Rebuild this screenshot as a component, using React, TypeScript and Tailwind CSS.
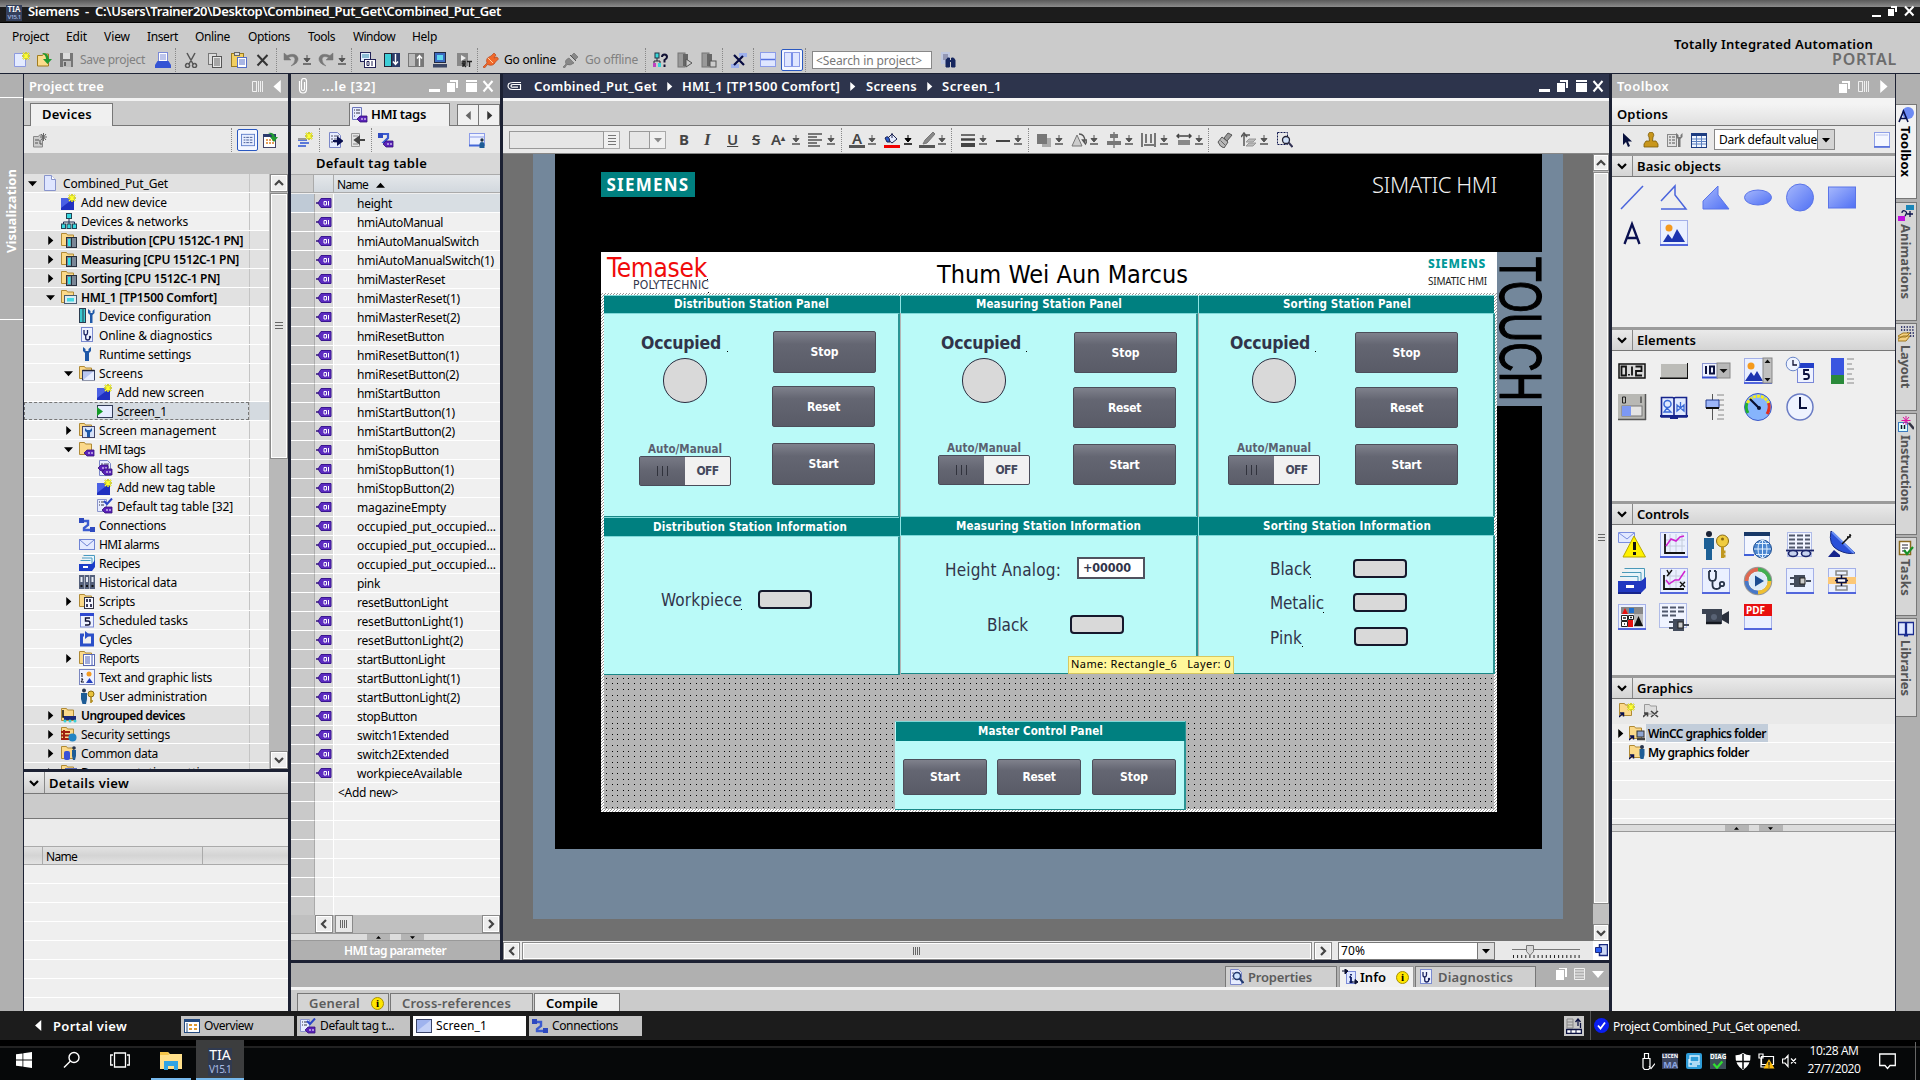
import React, { useLayoutEffect, useRef } from "react";

/* Text set to a given width by adjusting the letter spacing. */
function Fit({ w, children, className = "" }: { w: number; children: string; className?: string }) {
  const ref = useRef<HTMLSpanElement>(null);
  useLayoutEffect(() => {
    const el = ref.current;
    if (!el) return;
    el.style.letterSpacing = "0px";
    const box = el.getBoundingClientRect();
    const size = className.includes("vertical") ? box.height : box.width;
    el.style.letterSpacing = `${(w - size) / children.length}px`;
  }, [w, children, className]);
  return (
    <span ref={ref} className={`inline-block shrink-0 whitespace-pre ${className}`}>
      {children}
    </span>
  );
}

const star = (x: number, y: number) => (
  <g>
    <path d={`M${x} ${y - 4}v8M${x - 4} ${y}h8M${x - 3} ${y - 3}l6 6M${x + 3} ${y - 3}l-6 6`} stroke="#8a8a20" strokeWidth="1.700" />
    <path d={`M${x} ${y - 4}v8M${x - 4} ${y}h8M${x - 3} ${y - 3}l6 6M${x + 3} ${y - 3}l-6 6`} stroke="#ffff30" strokeWidth="1.100" />
  </g>
);
const folder = <path d="M.5 1.500h5l1 1.500h6v10.500h-12z" fill="#fbd98a" stroke="#b08a35" />;
const tagShape = (x: number, y: number) => (
  <g>
    <path d={`M${x} ${y + 3}l3-3h7v6h-7z`} fill="#5a22b8" stroke="#32107a" strokeWidth=".8" />
    <path d={`M${x + 5} ${y + 2}v2M${x + 8} ${y + 2}v2`} stroke="#fff" />
  </g>
);
const page = <path d="M2.500.500h8l3 3v12h-11z" fill="#e6ecff" stroke="#7a86c8" />;
const list = (c: string) => <path d="M4 4h2M7 4h5M4 7h2M7 7h5M4 10h2M7 10h5" stroke={c} />;

const I16: Record<string, React.ReactNode> = {
  project: (<><path d="M1.500.500h7l4 4v11h-11z" fill="#dfe6ff" stroke="#8894cc" /><path d="M8.500.500v4h4" fill="#fff" stroke="#8894cc" /></>),
  add: (<><rect x="0" y="4" width="13" height="12" fill="#2030c0" /><path d="M0 4h13L0 14z" fill="#4a60e4" />{star(11, 4)}</>),
  network: (<><path d="M8 5v4M2.500 12V9h11v3M8 9v3" stroke="#1b2a50" fill="none" /><rect x="5.500" y=".500" width="5" height="5" fill="#38d8e0" stroke="#245" /><rect x=".500" y="11" width="4" height="4.500" fill="#38d8e0" stroke="#245" /><rect x="6" y="11" width="4" height="4.500" fill="#38d8e0" stroke="#245" /><rect x="11.500" y="11" width="4" height="4.500" fill="#38d8e0" stroke="#245" /></>),
  plc: (<>{folder}<rect x="5.500" y="5.500" width="10" height="10" fill="#7a8696" stroke="#27303e" /><rect x="7" y="7" width="2.500" height="7" fill="#30e0e8" /><path d="M10.500 6v9" stroke="#27303e" /></>),
  hmi: (<>{folder}<rect x="3.500" y="6.500" width="12" height="8" fill="#d9ecf4" stroke="#4a5a70" /><rect x="6" y="9" width="7" height="3.500" fill="#45d8e2" /></>),
  devconf: (<><rect x=".500" y=".500" width="6" height="14" fill="#38c8ce" stroke="#2b3c50" /><path d="M4 1v13" stroke="#2b3c50" /><path d="M9 1v4l2 2v8h2.500V7l2-2V1l-2 2v2h-2V3z" fill="#1f58a8" /></>),
  diag: (<><rect x="2.500" y=".500" width="11" height="14" fill="#eef2ff" stroke="#7a8ad0" /><path d="M5 3v3q0 2 1.700 2T8.500 6V3M6.700 8v3q0 2 2 2t2-2" stroke="#1a2260" strokeWidth="1.300" fill="none" /><circle cx="11" cy="10" r="1.200" fill="#1a2260" /></>),
  wrench: <path d="M4 1v4l2 2v8h4V7l2-2V1L9.500 3v2h-3V3z" fill="#1f58a8" />,
  screens: (<>{folder}<rect x="3.500" y="5.500" width="12" height="9.500" fill="#b9c6f2" stroke="#333f66" /><path d="M4 15l11-9v9z" fill="#e8edff" /><path d="M3.500 5.500h12" stroke="#223" strokeWidth="1.500" /></>),
  screen: (<><rect x=".500" y="2.500" width="15" height="12" fill="#e6ecff" stroke="#333c58" /><path d="M0 4l6 4.500L0 13z" fill="#129a26" /></>),
  manage: (<>{folder}<rect x="3.500" y="4.500" width="12" height="11" fill="#d7e2f8" stroke="#446" /><path d="M6 6v3l2 1.500V15h3v-4.500L13 9V6l-2 2H8z" fill="#1f58a8" /></>),
  tagfolder: (<>{folder}{tagShape(5, 9)}</>),
  showtags: (<>{page}{list("#556")}{tagShape(1, 5)}{tagShape(5, 9)}</>),
  tagtable: (<><path d="M.500 1.500h9v12h-9z" fill="#e6ecff" stroke="#8a94cc" /><path d="M2 4h1M4 4h3M2 7h1M4 7h3" stroke="#334" /><path d="M7 3l3 3 5-5.500" stroke="#2a46c8" strokeWidth="2" fill="none" />{tagShape(5, 9)}</>),
  conn: (<><path d="M4 4h5v4l-4 3v2h7" stroke="#3b5bd0" strokeWidth="2.400" fill="none" /><rect x="0" y="1" width="5" height="5" fill="#2d49c0" /><rect x="11" y="10" width="5" height="5" fill="#2d49c0" /></>),
  mail: (<><rect x=".500" y="3.500" width="15" height="10" fill="#e4eaff" stroke="#6f83d4" /><path d="M1 4l7 6 7-6" stroke="#6f83d4" fill="none" /></>),
  recipe: (<><path d="M4.500.500h11v7M3 3h10v6M1.500 5.500h10" fill="#eaf6fc" stroke="#4a9ac0" /><path d="M0 9h13l3-4v7l-3 4H0z" fill="#1a3cc8" /><rect x="4" y="11" width="5" height="2" fill="#fff" /></>),
  history: (<><rect x="0" y="1" width="5" height="14" fill="#55607a" /><rect x="5.500" y="1" width="5" height="14" fill="#55607a" /><rect x="11" y="1" width="5" height="14" fill="#55607a" /><path d="M2.500 3v5M8 3v5M13.500 3v5" stroke="#e8ecf4" strokeWidth="2" /><path d="M2.500 11v2M8 11v2M13.500 11v2" stroke="#111" strokeWidth="2" /></>),
  scripts: (<>{folder}<rect x="5.500" y="4.500" width="9" height="11" fill="#f4f6ff" stroke="#334" /><path d="M8 6v3M11 6v3M8 11v3M12 11v3" stroke="#113" strokeWidth="1.600" /></>),
  sched: (<><rect x="1.500" y="1.500" width="13" height="13.500" fill="#eef2ff" stroke="#7a88d4" /><rect x="1" y="1" width="14" height="3" fill="#2f49d0" /><path d="M11 6H6.500v3h2.500q2 0 2 2t-2 2H6" stroke="#113" strokeWidth="1.400" fill="none" /></>),
  cycles: (<><path d="M5 4H2.500v10h11V4H9" stroke="#2b4fc8" strokeWidth="3" fill="none" /><path d="M6 0l5 4-5 4z" fill="#2b4fc8" /></>),
  reports: (<>{folder}<rect x="4.500" y="4.500" width="11" height="11" fill="#fff" stroke="#5a68b0" /><path d="M6 7h5M6 9h5M6 11h5M6 13h5M13 5v10" stroke="#4458b8" /></>),
  textlist: (<><rect x=".500" y=".500" width="15" height="15" fill="#eef2ff" stroke="#7a86c0" /><path d="M2 5l1-1v4M2 10h2l-2 3h3" stroke="#112" fill="none" /><circle cx="10" cy="5" r="2.500" fill="#f49a20" /><path d="M7 14l3.500-5L14 14z" fill="#2440c0" /></>),
  user: (<><circle cx="5" cy="2.500" r="2" fill="#26334c" /><path d="M2 5h6v6l-1 5H3.500L2 11z" fill="#1d5c96" /><circle cx="12" cy="6" r="3" fill="#e8c23c" stroke="#8a6a10" /><path d="M12 9v6M12 13h2" stroke="#b08a18" strokeWidth="1.600" /></>),
  ungrouped: (<>{folder}<path d="M2 3v7h9" stroke="#111" fill="none" strokeWidth="1.500" /><rect x="3" y="9" width="12" height="4" fill="#1a2a7a" /><circle cx="4" cy="14" r="1.500" fill="#38d0d8" /><circle cx="9" cy="14" r="1.500" fill="#38d0d8" /><circle cx="14" cy="14" r="1.500" fill="#38d0d8" /></>),
  security: (<>{folder}<path d="M0 6h9M0 9.500h9M0 13h8M3 4v9" stroke="#a02010" strokeWidth="2" /><circle cx="11.500" cy="11.500" r="4" fill="#2285c4" /></>),
  common: (<>{folder}<rect x="3" y="6" width="6" height="9" rx="2" fill="#3a52d8" /><circle cx="13" cy="3" r="1.800" fill="#26334c" /><path d="M11 5h4v6l-1 4h-2l-1-4z" fill="#1d5c96" /></>),
  newfile: (<><path d="M.500 1.500h11v13h-11z" fill="#e4ebff" stroke="#8d9ae0" />{star(12, 4)}</>),
  open: (<><path d="M.500 3.500h5l1-1.500h5v12h-11z" fill="#fbdc8c" stroke="#a07c20" /><path d="M5 1q6-1 7 6h3l-4.500 5L6 7h3q0-4-4-6" fill="#1f9a30" /></>),
  save: (<><rect x="1" y="1" width="13" height="14" fill="#777" /><rect x="4" y="1" width="7" height="6" fill="#ddd" /><rect x="4" y="9" width="8" height="6" fill="#bbb" /><path d="M6 10v4" stroke="#666" strokeWidth="2" /></>),
  print: (<><rect x="3.500" y=".500" width="9" height="9" fill="#fff" stroke="#7b8ad8" /><path d="M5 3h6M5 5h6M5 7h6" stroke="#7b8ad8" /><path d="M0 13l2.500-4h11l2.500 4v3H0z" fill="#3554d4" /></>),
  cut: <path d="M4 1l6 11M12 1L6 12M4.500 11.500a2 2 0 1 0 .1 0M11.500 11.500a2 2 0 1 0 .1 0" stroke="#555" strokeWidth="1.500" fill="none" />,
  copy: (<><rect x="1.500" y="1.500" width="8" height="11" fill="#ddd" stroke="#777" /><rect x="5.500" y="4.500" width="9" height="11" fill="#e8e8e8" stroke="#555" /><path d="M7 7h6M7 9h6M7 11h6M7 13h6" stroke="#666" /></>),
  paste: (<><rect x=".500" y="1.500" width="12" height="13" fill="#f2cf60" stroke="#9a7a20" /><rect x="3.500" y=".500" width="5" height="3" fill="#ddd" stroke="#666" /><rect x="6.500" y="5.500" width="9" height="10" fill="#fff" stroke="#556fc8" /><path d="M8 8h6M8 10h6M8 12h6" stroke="#556fc8" /></>),
  del: <path d="M2.500 3l10 10.500M12.500 3l-10 10.500" stroke="#333" strokeWidth="2" />,
  undo: <path d="M1 1v7h7L5.500 5.500Q11 3 12 7q0 4-4 7 8-3 7-8Q13 0 4 3.500z" fill="#777" stroke="#777" strokeWidth=".500" />,
  redo: <path d="M15 1v7H8l2.500-2.500Q5 3 4 7q0 4 4 7-8-3-7-8Q3 0 12 3.500z" fill="#777" stroke="#777" strokeWidth=".500" />,
  compile: (<><rect x=".500" y=".500" width="10" height="9" fill="#e6f0ff" stroke="#225" /><path d="M2 3h7M2 5h7" stroke="#38a" /><rect x="4.500" y="7.500" width="11" height="8" fill="#fff" stroke="#225" /><path d="M7 9.500v4h2v-4zM12 9v5" stroke="#225" fill="none" /></>),
  download: (<><rect x=".500" y="1.500" width="7" height="13" fill="#3ccdd6" stroke="#223" /><rect x="8" y="1" width="8" height="14" fill="#2b3c68" /><path d="M11.500 2v10M9 9.500l2.500 3 2.500-3" stroke="#fff" strokeWidth="1.400" fill="none" /></>),
  upload: (<><rect x=".500" y="1.500" width="7" height="13" fill="#bbb" stroke="#777" /><rect x="8" y="1" width="8" height="14" fill="#777" /><path d="M11.500 14V4M9 6.500l2.500-3 2.500 3" stroke="#fff" strokeWidth="1.400" fill="none" /></>),
  sim: (<><rect x="2.500" y=".500" width="11" height="10" fill="#3b6ac0" stroke="#222a44" /><rect x="5" y="3" width="6" height="5" fill="#60d8f0" /><rect x="1" y="12" width="14" height="3.500" fill="#3b4664" /></>),
  rt: (<><rect x="1" y="1" width="11" height="13" fill="#888" /><path d="M5 3l5 3-5 3z" fill="#eee" /><path d="M7 15V9.500h2l0 2.500H7l3 3M11 9.500h5M13.500 10v5" stroke="#222" strokeWidth="1.400" fill="none" /></>),
  plug: (<><path d="M0 15l4-4Q2 6 8 4l3-3 2 2-2 3 3-1 1.500 2-3 3Q10 15 4.500 12.500L1.500 16z" fill="#f0682a" stroke="#b03a10" strokeWidth=".600" /><path d="M5 6l5 5" stroke="#ffd0a0" /></>),
  unplug: (<><path d="M0 15l3-3Q1 8 6 6l5 5Q7 14 4 12.500L1.500 16zM8 4l3-3 4 4-3 3z" fill="#888" stroke="#666" strokeWidth=".600" /><path d="M7 3l6 6" stroke="#555" /></>),
  access: (<><path d="M4 5v4M1 13V9h6v4" stroke="#223" fill="none" /><rect x="2" y="1" width="4" height="5" fill="#38d8d8" stroke="#234" /><rect x="0" y="11" width="3" height="4" fill="#c040c0" /><rect x="5" y="11" width="3" height="4" fill="#38d8d8" /><path d="M9 5q0-2.500 2.500-2.500T14 5q0 1.500-2.500 3v2.500M11.500 12.500v2.500" stroke="#113" strokeWidth="2" fill="none" /></>),
  startcpu: (<><rect x="1" y="1" width="7" height="14" fill="#999" stroke="#777" /><rect x="6" y="2" width="5" height="12" fill="#666" /><path d="M9 7l6 4-6 4z" fill="#ccc" stroke="#555" /></>),
  stopcpu: (<><rect x="1" y="1" width="7" height="14" fill="#999" stroke="#777" /><rect x="6" y="2" width="5" height="12" fill="#666" /><rect x="9" y="9" width="6" height="6" fill="#ccc" stroke="#555" /></>),
  xref: (<><rect x="8" y="1" width="8" height="4" fill="#9db0ec" /><rect x="0" y="12" width="8" height="4" fill="#9db0ec" /><path d="M3 3l10 10M12 4L3 13" stroke="#060a40" strokeWidth="2.200" /></>),
  splith: (<><rect x=".500" y=".500" width="15" height="14" fill="#dfe6ff" stroke="#8c9ce8" /><path d="M1 7.500h14" stroke="#5570e0" strokeWidth="1.500" /></>),
  splitv: (<><rect x=".500" y=".500" width="15" height="14" fill="#dfe6ff" stroke="#8c9ce8" /><path d="M8 1v13" stroke="#5570e0" strokeWidth="1.500" /></>),
  find: (<><rect x="0" y="0" width="9" height="12" fill="#c0c8e0" /><path d="M2 3h5M2 5h5M2 7h3" stroke="#668" /><path d="M5 15V8l1.500-2h2V15zM10.500 15V6h2L14 8v7z" fill="#16265e" stroke="#16265e" /><path d="M8 9h3" stroke="#16265e" strokeWidth="2" /></>),
  hmitags: (<><path d="M.500.500h9v12h-9z" fill="#e6ecff" stroke="#6a74bc" /><path d="M2 3h1M4 3h4M2 6h1M4 6h4M2 9h1" stroke="#334" />{tagShape(5, 9)}</>),
  grayfolder: (<><path d="M1.500 4.500h5l1-1.500h3v12h-9z" fill="#ccc" stroke="#888" /><path d="M3 8h4M3 11h3M8 8v4h2" stroke="#555" fill="none" /><path d="M11.500 1v8M8 5h7M9 2l5 6M14 2L9 8" stroke="#666" /></>),
  grid: (<><rect x=".500" y="1.500" width="15" height="13" fill="#e6edff" stroke="#5a7ac8" /><path d="M3 5h2M6 5h3M10 5h3M3 8h2M6 8h3M10 8h3M3 11h2M6 11h3M10 11h3" stroke="#334a88" /></>),
  gridgreen: (<><rect x="0.500" y="2.500" width="12" height="13" fill="#fff" stroke="#446" /><rect x="0" y="2" width="13" height="3" fill="#2a3a6c" /><path d="M3 8h2M6 8h2M9 8h2M3 11h2M6 11h2M9 11h2" stroke="#e08020" strokeWidth="1.500" /><path d="M5 1q6-1 7 4h3l-4 5-4-5h2q0-3-4-4" fill="#1f9a30" /></>),
  insrow: (<><path d="M0 8h9M2 11h9M0 14h8" stroke="#5a78d8" strokeWidth="2" /><path d="M0 7h8" stroke="#999" strokeWidth="2" />{star(11, 4)}</>),
  exp: (<>{page}{list("#556")}<path d="M6 9h7M11 6l4 3-4 3z" stroke="#0a1050" strokeWidth="2" fill="#0a1050" /></>),
  imp: (<><path d="M1.500 1.500h8v13h-8z" fill="#e4e4e4" stroke="#999" /><path d="M3 4h5M3 12h5" stroke="#888" /><path d="M15 8H8M9 5L5 8l4 3z" stroke="#444" strokeWidth="2" fill="#444" /></>),
  tagconn: (<><path d="M2 2h8v4l-4 4h4" stroke="#3b5bd0" strokeWidth="2.200" fill="none" /><rect x="0" y="1" width="5" height="5" fill="#2d49c0" />{tagShape(5, 9)}</>),
  winuser: (<><rect x=".500" y="1.500" width="15" height="12" fill="#eef2ff" stroke="#8c9ce8" /><path d="M0 13.500h11" stroke="#4468d8" strokeWidth="2" /><path d="M1 5h14" stroke="#8c9ce8" /><circle cx="13" cy="8" r="1.700" fill="#234" /><path d="M10.500 16v-4q0-2 2.500-2t2.500 2v4z" fill="#1d5c96" /></>),
  tag: (<><path d="M0 8h4" stroke="#32107a" strokeWidth="1.500" /><path d="M2 8l3-4.500h10v9H5z" fill="#5c2cc0" stroke="#3a1690" /><path d="M8 6.500h2.500v3.500H8zM12.500 6v4.500" stroke="#fff" fill="none" /></>),
  cursor: <path d="M4 1v12l3-3 2 5 2-1-2-4.500h4z" fill="#08103c" />,
  stamp: <path d="M8 0a3 3 0 0 1 2 5l-.5 4H13l2 3v3H1v-3l2-3h3.500L6 5a3 3 0 0 1 2-5z" fill="#c8961c" stroke="#7a5a08" strokeWidth=".800" />,
  toolcfg: (<><rect x="0.500" y="2.500" width="9" height="12" fill="#e2e2e2" stroke="#888" /><path d="M2 5h2M5 5h3M2 8h2M5 8h3M2 11h2M5 11h3" stroke="#555" /><path d="M9 1v4l2 2v8h2.500V7l2-2V1l-2 2v2h-2V3z" fill="#777" /></>),
  table: (<><rect x=".500" y="1.500" width="15" height="14" fill="#f0f6ff" stroke="#1c3c80" /><rect x="0" y="1" width="16" height="3" fill="#1c3c80" /><path d="M5.500 4v11M10.500 4v11M1 7h14M1 9.500h14M1 12h14" stroke="#5a80c0" /></>),
  win: (<><rect x=".500" y=".500" width="15" height="14" fill="#f4f7ff" stroke="#8fa0e6" /><path d="M0 15h16" stroke="#4a66d8" strokeWidth="1.500" /><path d="M2 3h12" stroke="#b8c2ee" /></>),
  overview: (<><rect x=".500" y="1.500" width="15" height="13" fill="#fff" stroke="#234a80" /><rect x="0" y="1" width="16" height="3" fill="#234a80" /><path d="M5 7h3M10 7h3M5 11h3M10 11h3" stroke="#e09a30" strokeWidth="2" /><path d="M3 5v9" stroke="#234a80" /></>),
  scr: (<><rect x=".500" y="1.500" width="15" height="13" fill="#c3d0f6" stroke="#3a4468" /><path d="M1 2h14L1 13z" fill="#9fb3ee" /></>),
  props: (<>{page}{list("#778")}<circle cx="9" cy="7" r="3.500" fill="#cfe4ff" stroke="#223a70" strokeWidth="1.400" /><path d="M11.500 9.500l4 4.500" stroke="#223a70" strokeWidth="2" /></>),
  infoi: (<><rect x="4.500" y="2.500" width="9" height="12" fill="#dfe8ff" stroke="#7a8ad8" /><path d="M9 5v1.500M9 8v5M7.500 13h3M7.500 8H9" stroke="#0a1860" strokeWidth="1.800" /><path d="M0 2h5M3 0l3 2-3 3zM10 13h4M13 10.500l3 2.500-3 2z" fill="#0a1030" stroke="#0a1030" /></>),
  newgf: (<>{folder}<path d="M0 15l4-4M1 11h3.500v3.500" stroke="#0a1050" strokeWidth="1.500" fill="none" />{star(12, 5)}</>),
  delgf: (<><path d="M1.500 2.500h5l1 1.500h6v8h-12z" fill="#ddd" stroke="#999" /><path d="M0 15l4-4M1 11h3.500v3.500M8 9l7 6M15 9l-7 6" stroke="#444" strokeWidth="1.600" fill="none" /></>),
  gfpc: (<>{folder}<rect x="8" y="6" width="7" height="6" fill="#8ea4d0" stroke="#333" /><path d="M8 14h8" stroke="#444" strokeWidth="2.500" /><path d="M0 15l4-4M1 11h3.500v3.500" stroke="#0a1050" strokeWidth="1.500" fill="none" /></>),
  gfuser: (<>{folder}<circle cx="13" cy="3" r="2" fill="#26334c" /><path d="M10.500 5h5v6l-1 4h-3l-1-4z" fill="#1d5c96" /><path d="M0 15l4-4M1 11h3.500v3.500" stroke="#0a1050" strokeWidth="1.500" fill="none" /></>),
  align: <path d="M1 2h14M1 5h9M1 8h14M1 11h9M1 14h12" stroke="#777" strokeWidth="2" />,
  fill: (<><path d="M3 7l5-5 5 5-5 4z" fill="#e6ecff" stroke="#1a2250" /><path d="M1 6q4-4 5 4H3zM8 1v5" fill="#2a58c8" stroke="#1a2250" /><rect x="0" y="13" width="16" height="3" fill="#f00000" /></>),
  pen: (<><path d="M14 0l2 2-8 9-4 1 2-4z" fill="#888" stroke="#777" /><rect x="0" y="13" width="16" height="3" fill="#555" /></>),
  lines: (<><path d="M1 3h14" stroke="#444" strokeWidth="1.500" /><path d="M1 7.500h14" stroke="#444" strokeWidth="2.500" /><path d="M1 13h14" stroke="#444" strokeWidth="4" /></>),
  line1: <path d="M1 9h14" stroke="#444" strokeWidth="2" />,
  order: (<><rect x="6" y="6" width="9" height="9" fill="#aaa" /><rect x="1" y="2" width="10" height="10" fill="#777" /></>),
  rotate: (<><path d="M1 14l5-11 5 11z" fill="#ccc" stroke="#777" /><path d="M8 2q6 0 6 8M11.500 8l3 4 2-4z" stroke="#555" fill="none" strokeWidth="1.300" /></>),
  center: (<><path d="M8 0v16" stroke="#444" /><rect x="4" y="2" width="8" height="4" fill="#777" /><rect x="1" y="9" width="14" height="4" fill="#777" /></>),
  dist: <path d="M1 1v14M14 1v14M5 2v9M10 2v9M3 13h10" stroke="#777" strokeWidth="2" />,
  size: (<><path d="M1 4h14M3 2L1 4l2 2M13 2l2 2-2 2" stroke="#444" fill="none" strokeWidth="1.500" /><rect x="2" y="8" width="12" height="5" fill="#888" /></>),
  brush: (<><path d="M11 1l4 2-5 6-3-3z" fill="#999" stroke="#555" /><path d="M5 5l6 5-4 6q-4-1-6-6z" fill="#b8b8b8" stroke="#555" /><path d="M3.500 8.500l5 5" stroke="#666" /></>),
  layer: (<><path d="M3 14V3M0 5l3-4 3 4M3 3h6" stroke="#555" strokeWidth="1.500" fill="none" /><path d="M5 10l3-3h7l-3 3zM5 14l3-3h7l-3 3z" fill="#bbb" stroke="#999" /></>),
  zoomsel: (<><rect x=".500" y=".500" width="10" height="12" fill="none" stroke="#101850" strokeDasharray="2 1" /><circle cx="9" cy="8" r="3.500" fill="#cfe0f8" stroke="#223" strokeWidth="1.300" /><path d="M11.500 10.500l4 4.500" stroke="#335" strokeWidth="2" /></>),
  tabtool: (<><circle cx="10" cy="6" r="6" fill="#6c8af4" /><path d="M1 15L5.500 4 10 15M2.500 11.500h6" stroke="#08104a" strokeWidth="1.600" fill="none" /></>),
  tabanim: (<><rect x="8" y="0" width="8" height="5" fill="#1a86b8" /><rect x="0" y="11" width="7" height="5" fill="#c010e0" /><path d="M4 8q0-3 3-2t0 5M12 6v6M9 9h6" stroke="#08104a" strokeWidth="1.300" fill="none" /></>),
  tablayout: (<><path d="M3 1h13M3 4h13M9 7h7M12 10h4" stroke="#0a1050" strokeWidth="1.300" strokeDasharray="1.300 1.500" /><path d="M0 13l5-3h7l-4 5H0zM0 10l5-3h7l-4 4H0z" fill="#f4d080" stroke="#a07820" /></>),
  tabinstr: (<><rect x=".500" y="6.500" width="9" height="9" fill="#dff" stroke="#3a7ac0" /><path d="M3.500 9v4M6.500 9v4" stroke="#112" strokeWidth="1.500" /><path d="M8 0v9M3.500 4.500h9M5 1l6 7M11 1L5 8" stroke="#e010a0" /><path d="M11 7l5 6" stroke="#334" strokeWidth="2.500" /></>),
  tabtasks: (<><rect x="1.500" y="1.500" width="11" height="13" fill="#fff" stroke="#8a6a20" strokeWidth="1.500" /><path d="M4 5h6M4 8h6M4 11h4" stroke="#223" /><path d="M6 10l3 4 6-7" stroke="#189028" strokeWidth="2.200" fill="none" /></>),
  tablib: (<><path d="M.500 1.500h7v12h-7zM8.500 1.500h7v12h-7z" fill="#dfe8ff" stroke="#1a2c90" strokeWidth="1.300" /><path d="M6 14.500h4" stroke="#1a2c90" strokeWidth="2" /></>),
};

function Ic({ n, s = 16, className = "" }: { n: string; s?: number; className?: string }) {
  return (
    <svg width={s} height={s} viewBox="0 0 16 16" fill="none" className={`block shrink-0 ${className}`}>
      {I16[n]}
    </svg>
  );
}

const frame28 = <><rect x=".500" y="1.500" width="27" height="25" fill="#eaf0ff" stroke="#a4b0e8" /><path d="M0 26h28" stroke="#5266dc" strokeWidth="2" /></>;
const I28: Record<string, React.ReactNode> = {
  line: <path d="M3 26L25 3" stroke="#4a64dc" strokeWidth="1.500" />,
  poly: <path d="M1 18L15 3v9l11 14H1" stroke="#4a64dc" strokeWidth="1.500" />,
  polygon: <path d="M1 26v-8L16 3v9l11 14z" fill="url(#gb)" stroke="#5a74e8" />,
  ellipse: <ellipse cx="14" cy="14.500" rx="13.500" ry="7.500" fill="url(#gb)" stroke="#5a74e8" />,
  circle: <circle cx="14" cy="14.500" r="13.500" fill="url(#gb)" stroke="#5a74e8" />,
  rect: <rect x=".500" y="4" width="27" height="21" fill="url(#gb)" stroke="#5a74e8" />,
  text: <path d="M6.500 25L14 5l7.500 20M9 19h10" stroke="#0a1050" strokeWidth="2.300" />,
  pic: (<>{frame28}<circle cx="9" cy="9" r="3.500" fill="#f49a20" /><path d="M3 23l5-8 4 5 5-10 8 13z" fill="#1c34b0" /></>),
  num: (<><rect x="1" y="7" width="26" height="14" fill="#d8d8d8" stroke="#111" strokeWidth="1.500" /><path d="M3.500 9.500h4.500v9H3.500zM11 18.500v-1.500M14 9.500v9M17.500 9.500h6v4.500H18v4.500h6" stroke="#111" strokeWidth="1.800" /></>),
  btn: (<><rect x="0" y="6" width="28" height="16" fill="#111" /><rect x="0" y="6" width="27" height="14.500" fill="#bcbcb8" /><path d="M0 6.500h27M.500 6v14" stroke="#eee" /></>),
  combo: (<><rect x=".500" y="6.500" width="27" height="14" fill="#eef2ff" stroke="#8a94d0" /><path d="M0 20.500h16" stroke="#3850d0" strokeWidth="2" /><path d="M4 9v8M8 9.500h4v7H8z" stroke="#0a1040" strokeWidth="2" /><rect x="15" y="6" width="13" height="15" fill="#b8b8b8" stroke="#888" /><path d="M17.500 12h8l-4 4z" fill="#111" /></>),
  gio: (<>{frame28}<circle cx="7" cy="9" r="3.500" fill="#f49a20" /><path d="M1 24l6-9 3 4 3-5 6 10z" fill="#1c34b0" /><rect x="19" y="1" width="9" height="25" fill="#c0c0c0" stroke="#888" /><path d="M20.500 6l3-3.500 3 3.500zM20.500 21l3 3.500 3-3.500z" fill="#111" /></>),
  date: (<><rect x="11.500" y="6.500" width="16" height="19" fill="#eef2ff" stroke="#7a88d8" /><rect x="11" y="6" width="17" height="5" fill="#2440c8" /><path d="M23 13h-5v4h2.500q2.500 0 2.500 2.500T20.500 22H17.500" stroke="#0a1040" strokeWidth="1.800" /><circle cx="7" cy="7" r="6.800" fill="#eef3ff" stroke="#6a86c8" /><path d="M7 3v5h4" stroke="#113" strokeWidth="1.300" /></>),
  bar: (<><rect x="3" y="1" width="13" height="26" fill="#3a56e0" /><rect x="3" y="18" width="13" height="9" fill="#2a8a3a" /><path d="M19 2h7M19 7h5M19 12h7M19 17h5M19 22h7M19 26h7" stroke="#888" /></>),
  sw: (<><rect x="0" y="1" width="28" height="26" fill="#b8b8b4" /><path d="M0 26.500h28M27.500 1v26" stroke="#555" strokeWidth="1.500" /><path d="M4.500 4h3v6h-3zM23 3.500V10" stroke="#222" /><rect x="4" y="13" width="20" height="10" fill="#e4e4e4" stroke="#777" /><rect x="4" y="13" width="9" height="10" fill="#7c98f4" /></>),
  lib: (<><path d="M1.500 4.500h11q1.500 0 1.500 1.500v18H1.500zM26.500 4.500h-11Q14 4.500 14 6v18h12.500z" fill="#e0eaff" stroke="#16248c" strokeWidth="1.600" /><path d="M0 23h28M10 25h8" stroke="#16248c" strokeWidth="2" /><circle cx="7.500" cy="11" r="3.500" stroke="#3a6ad8" strokeWidth="1.500" /><path d="M4 19l3-4 4 4zM17 12l7 6v-6l-7 6zM20.500 15V9" stroke="#3a6ad8" strokeWidth="1.300" /></>),
  slider: (<><path d="M15 2h7M16 7h6M16 12h6M16 17h6M16 22h6M15 26h7" stroke="#888" /><path d="M10.500 1v26" stroke="#555" /><path d="M4 7h13v8H4z" fill="#9db6f8" stroke="#223a90" /><path d="M4 15h13" stroke="#111" strokeWidth="2" /></>),
  gauge: (<><circle cx="14" cy="14" r="13.500" fill="#86b4fc" stroke="#3c58c8" /><path d="M4 20a11.500 11.500 0 0 1-1-10" stroke="#20b030" strokeWidth="3" /><path d="M3.500 10a11.500 11.500 0 0 1 21 0" stroke="#f4ec20" strokeWidth="3" strokeDasharray="3 1" /><path d="M24.500 10q2 5-1.500 11" stroke="#e03020" strokeWidth="3" /><path d="M6 6l9 9" stroke="#0a1030" strokeWidth="2.200" /><circle cx="15" cy="15" r="2" fill="#0a1030" /></>),
  clock: (<><circle cx="14" cy="14" r="13" fill="#eef3ff" stroke="#6a7cc4" strokeWidth="1.500" /><path d="M14 4v11h7" stroke="#08103a" strokeWidth="2" /></>),
  alarm: (<><path d="M.500 1.500h16v10H.500z" fill="#e2e9ff" stroke="#7a8ee0" /><path d="M1 2l8 6 7-6" stroke="#7a8ee0" /><path d="M16 5l11.500 21H5z" fill="#fff200" stroke="#b8a800" /><path d="M16.500 11v8M16.500 21v3" stroke="#111" strokeWidth="3" /></>),
  trend: (<>{frame28}<path d="M10 3v18M16 3v18M22 3v18M5 9h20M5 15h20" stroke="#c4ccdc" /><path d="M5 3v19h20" stroke="#111" strokeWidth="1.800" /><path d="M6 15l5-7 5 2 4-4 4-1" stroke="#d020d0" strokeWidth="1.500" /></>),
  userk: (<><circle cx="7" cy="3" r="3" fill="#1a2236" /><path d="M2 7h10v11H10v11H4V18H2z" fill="#1d6096" /><circle cx="20.500" cy="10" r="6" fill="#f0cc40" stroke="#8a6a10" /><circle cx="20.500" cy="8" r="1.500" fill="#8a6a10" /><path d="M20.500 15v12M20.500 21h3M20.500 25h3" stroke="#c09820" strokeWidth="3" /></>),
  html: (<><rect x=".500" y="1.500" width="25" height="22" fill="#f4f7ff" stroke="#a4b4e0" /><rect x="0" y="1" width="26" height="4" fill="#183868" /><path d="M0 24h10" stroke="#4060d8" strokeWidth="2" /><circle cx="18.500" cy="18" r="9" fill="#4a86d0" stroke="#1c4c90" /><path d="M10 18h17M18.500 9v18M12 12.500h13M12 23.500h13" stroke="#e0efff" /><ellipse cx="18.500" cy="18" rx="4.500" ry="9" stroke="#e0efff" /></>),
  watch: (<><rect x="1.500" y="1.500" width="24" height="24" fill="#f0f4ff" stroke="#b0bce8" /><path d="M3 4.500h6M11 4.500h6M19 4.500h5M3 8.500h6M11 8.500h6M19 8.500h5M3 12.500h6M11 12.500h6M19 12.500h5M3 16.500h6M11 16.500h6M19 16.500h5" stroke="#50586c" strokeWidth="2" /><path d="M0 19.500h28" stroke="#1a2468" strokeWidth="1.800" /><ellipse cx="7" cy="22.500" rx="4.500" ry="3" fill="#c8d4f0" stroke="#1a2468" strokeWidth="1.600" /><ellipse cx="20" cy="22.500" rx="4.500" ry="3" fill="#c8d4f0" stroke="#1a2468" strokeWidth="1.600" /></>),
  dish: (<><path d="M3 0Q0 14 10 19t17 3z" fill="#2a50d8" stroke="#182a80" /><path d="M4 1l22 21" stroke="#6a90f4" strokeWidth="2" /><path d="M14 13l9-9M22 3v3h-3" stroke="#111" strokeWidth="1.500" /><path d="M0 26l6-7 6 5v2z" fill="#16248c" /></>),
  recv: (<><path d="M6.500 1.500h20v13M4 5.500h19v9M2 9.500h18v6" fill="#e8f4fa" stroke="#4a98b8" /><path d="M0 14h23l5-4v11l-5 5H0z" fill="#2038c0" /><path d="M0 26h23" stroke="#16248c" strokeWidth="2" /><rect x="8" y="18" width="8" height="3" fill="#fff" /></>),
  xy: (<>{frame28}<path d="M10 3v18M16 3v18M5 9h20M5 15h20" stroke="#c4ccdc" /><path d="M4 8v14h20" stroke="#111" strokeWidth="1.800" /><path d="M6 13l3 4 6-4 4 0 6-9" stroke="#d020d0" strokeWidth="1.500" /><path d="M7 3l2 4 3-4M9 7l-2 2M20 15l5 5M25 15l-5 5" stroke="#111" strokeWidth="1.400" /></>),
  diag: (<>{frame28}<path d="M7 4v6q0 4 3.500 4T14 10V4M10.500 14v4q0 4 4 4t4-4M7 4h2M12 4h2" stroke="#283448" strokeWidth="1.800" /><circle cx="20" cy="17" r="2.200" stroke="#283448" strokeWidth="1.800" /></>),
  media: (<><circle cx="14" cy="14" r="12" stroke="#999" strokeWidth="4.500" /><path d="M14 2.500A11.500 11.500 0 0 1 25.500 14" stroke="#40b050" strokeWidth="3.500" /><path d="M25.500 14A11.500 11.500 0 0 1 14 25.500" stroke="#f0c030" strokeWidth="3.500" /><path d="M14 25.500A11.500 11.500 0 0 1 2.500 14" stroke="#4878c8" strokeWidth="3.500" /><path d="M2.500 14A11.500 11.500 0 0 1 14 2.500" stroke="#e06850" strokeWidth="3.500" /><circle cx="14" cy="14" r="9" fill="#dceaf8" /><path d="M11 8.500l9 5.500-9 5.500z" fill="#1c4c90" /></>),
  plugc: (<>{frame28}<path d="M4 11h5M4 17h5M20 14h5" stroke="#444c5c" strokeWidth="2" /><path d="M8 8h11v12H8z" fill="#444c5c" /><rect x="14" y="11" width="5" height="6" fill="#ccc" stroke="#222" /></>),
  sysd: (<>{frame28}<rect x="0" y="10" width="28" height="7" fill="#fcc878" /><rect x="8" y="4" width="11" height="4" stroke="#888" strokeWidth="1.500" /><rect x="8" y="19" width="11" height="4" stroke="#888" strokeWidth="1.500" /><path d="M13.500 8v11M7 13.500h13" stroke="#0a1040" strokeWidth="1.500" /><rect x="9" y="11.500" width="9" height="4" fill="#fff" stroke="#0a1040" strokeWidth="1.600" /></>),
  graf: (<>{frame28}<rect x="3" y="4" width="22" height="7" fill="#888" /><path d="M4 11l3-6 3 6z" fill="#e81010" /><rect x="11" y="5" width="5" height="5" fill="#2070d0" /><path d="M3.500 12.500h6v5h-6zM3.500 18.500h6v5h-6zM10.500 12.500h5v4h-5z" fill="#fff" stroke="#222" /><path d="M5 15h3M12 14.500h2M6 21h1" stroke="#222" strokeWidth="1.500" /><rect x="10" y="17" width="5" height="7" fill="#e81010" /><rect x="16" y="11" width="9" height="13" fill="#bbb" /><path d="M16 23l4.500-10L25 23z" fill="#111" /></>),
  plcw: (<><rect x="-.500" y=".500" width="27" height="24" fill="#f0f4ff" stroke="#b0bce8" /><path d="M2 4.500h6M10 4.500h6M18 4.500h6M2 8.500h6M10 8.500h6M18 8.500h6M2 12.500h6M10 12.500h6" stroke="#50586c" strokeWidth="2" /><path d="M9 19h5M9 25h5M24 22h5" stroke="#444c5c" strokeWidth="2" /><path d="M13 16h11v12H13z" fill="#444c5c" /><rect x="18" y="19" width="5" height="6" fill="#ccc" stroke="#222" /></>),
  cam: (<><path d="M0 6h20v15H4V11H0z" fill="#3c4452" /><path d="M20 12l7-4v13l-7-4z" fill="#2a303c" /><circle cx="12" cy="14" r="3" fill="#586274" /><path d="M4 20h15" stroke="#14181f" strokeWidth="2.500" /></>),
  pdf: (<>{frame28}<rect x="0" y="1" width="28" height="12" fill="#e81010" /></>),
};

function Big({ n }: { n: string }) {
  return (
    <div className="relative h-9 w-[42px]">
      <svg width="28" height="28" viewBox="0 0 28 28" fill="none" className="block overflow-visible">{I28[n]}</svg>
      {n === "pdf" && <span className="absolute top-0 left-[2px] text-[10px] leading-[14px] font-bold text-white">PDF</span>}
    </div>
  );
}

const Sep = ({ className = "" }: { className?: string }) => (
  <span className={`w-0 shrink-0 border-l border-dotted border-[#888] ${className}`} />
);
const Pm = ({ className = "", c = "#555" }: { className?: string; c?: string }) => (
  <svg width="8" height="10" viewBox="0 0 8 10" className={`block shrink-0 ${className}`}>
    <path d="M4 0v6M1 3.500L4 7l3-3.500z" stroke={c} fill={c} /><path d="M0 9h8" stroke={c} strokeWidth="1.500" />
  </svg>
);
const Chev = ({ d, c = "#444" }: { d: "up" | "down" | "left" | "right"; c?: string }) => (
  <svg width="10" height="10" viewBox="0 0 10 10" fill="none" stroke={c} strokeWidth="2.200" className="block">
    <path d={{ up: "M1 7l4-4 4 4", down: "M1 3l4 4 4-4", left: "M7 1L3 5l4 4", right: "M3 1l4 4-4 4" }[d]} />
  </svg>
);
const SbBtn = ({ d, className = "" }: { d: "up" | "down" | "left" | "right"; className?: string }) => (
  <span className={`flex shrink-0 items-center justify-center border border-[#8a8a8a] bg-[#ededed] shadow-[inset_0_0_0_1px_#fff] ${className}`}>
    <Chev d={d} />
  </span>
);
const WinBtns = ({ c = "#fff" }: { c?: string }) => (
  <svg width="66" height="14" viewBox="0 0 66 14" fill={c} className="block shrink-0">
    <path d="M0 10h11v3H0z" /><path d="M18 4h8v9h-8z" /><path d="M21 1h8v8h-2V3h-6z" /><path d="M37 1h11v2H37zM37 4h11v9H37z" />
    <path d="M54.500 2l9 10.500M63.500 2l-9 10.500" stroke={c} strokeWidth="2" />
  </svg>
);
const Bars = () => (
  <svg width="11" height="11" viewBox="0 0 11 11" className="block"><path d="M.500.500h4v10h-4zM4.500 0v11M6.500 0v11M8.500 0v11M10.500 0v11" stroke="#f0f0f0" fill="none" /></svg>
);
const Tri = ({ d, s = 8, c = "#000" }: { d: "l" | "r" | "u" | "d"; s?: number; c?: string }) => (
  <svg width={s} height={s} viewBox="0 0 8 8" fill={c} className="block shrink-0">
    <path d={{ l: "M6 0v8L1.500 4z", r: "M2 0v8l4.500-4z", u: "M0 6h8L4 1.500z", d: "M0 2h8L4 6.500z" }[d]} />
  </svg>
);

type TreeRow = [number, string, string, number, ("r" | "d" | "")?, boolean?, boolean?];
const tree: TreeRow[] = [
  [0, "project", "Combined_Put_Get", 105, "d", true],
  [1, "add", "Add new device", 86],
  [1, "network", "Devices & networks", 107],
  [1, "plc", "Distribution [CPU 1512C-1 PN]", 162, "r", true, true],
  [1, "plc", "Measuring [CPU 1512C-1 PN]", 158, "r", true, true],
  [1, "plc", "Sorting [CPU 1512C-1 PN]", 139, "r", true, true],
  [1, "hmi", "HMI_1 [TP1500 Comfort]", 136, "d", true, true],
  [2, "devconf", "Device configuration", 112],
  [2, "diag", "Online & diagnostics", 113],
  [2, "wrench", "Runtime settings", 92],
  [2, "screens", "Screens", 44, "d"],
  [3, "add", "Add new screen", 87],
  [3, "screen", "Screen_1", 50],
  [2, "manage", "Screen management", 117, "r"],
  [2, "tagfolder", "HMI tags", 46, "d"],
  [3, "showtags", "Show all tags", 72],
  [3, "add", "Add new tag table", 98],
  [3, "tagtable", "Default tag table [32]", 116],
  [2, "conn", "Connections", 67],
  [2, "mail", "HMI alarms", 60],
  [2, "recipe", "Recipes", 41],
  [2, "history", "Historical data", 78],
  [2, "scripts", "Scripts", 36, "r"],
  [2, "sched", "Scheduled tasks", 89],
  [2, "cycles", "Cycles", 33],
  [2, "reports", "Reports", 40, "r"],
  [2, "textlist", "Text and graphic lists", 113],
  [2, "user", "User administration", 108],
  [1, "ungrouped", "Ungrouped devices", 104, "r", true, true],
  [1, "security", "Security settings", 89, "r", true],
  [1, "common", "Common data", 77, "r", true],
  [1, "reports", "Documentation settings", 140, "r", true],
];
const indent = ["w-[2px]", "w-[20px]", "w-[38px]", "w-[56px]"];

const tags: [string, number][] = [
  ["height", 35], ["hmiAutoManual", 86], ["hmiAutoManualSwitch", 122], ["hmiAutoManualSwitch(1)", 137], ["hmiMasterReset", 88],
  ["hmiMasterReset(1)", 103], ["hmiMasterReset(2)", 103], ["hmiResetButton", 87], ["hmiResetButton(1)", 102], ["hmiResetButton(2)", 102],
  ["hmiStartButton", 83], ["hmiStartButton(1)", 98], ["hmiStartButton(2)", 98], ["hmiStopButton", 82], ["hmiStopButton(1)", 97],
  ["hmiStopButton(2)", 97], ["magazineEmpty", 89], ["occupied_put_occupied...", 139], ["occupied_put_occupied...", 139],
  ["occupied_put_occupied...", 139], ["pink", 23], ["resetButtonLight", 91], ["resetButtonLight(1)", 106], ["resetButtonLight(2)", 106],
  ["startButtonLight", 88], ["startButtonLight(1)", 103], ["startButtonLight(2)", 103], ["stopButton", 60], ["switch1Extended", 92],
  ["switch2Extended", 92], ["workpieceAvailable", 105],
];

function ProjectTree() {
  return (
    <div className="flex w-[264px] flex-col bg-[#efefef]">
      <div className="flex h-6 items-center bg-[#b0b0b0] pr-1 pl-[5px] text-[13px] font-semibold text-white">
        <Fit w={75} className="pt-px">Project tree</Fit>
        <span className="ml-auto flex items-center gap-2"><Bars /><Tri d="l" s={13} c="#fff" /></span>
      </div>
      <div className="h-[3px] bg-[#f2f2f2]" />
      <div className="flex h-[25px] items-end border-b border-[#777] bg-[#cbcbcb] pl-[6px]">
        <div className="-mb-px flex h-[23px] w-[83px] items-center border border-b-0 border-[#777] bg-[#f0f0f0] pl-[11px] text-[13px] font-semibold">
          <Fit w={50}>Devices</Fit>
        </div>
      </div>
      <div className="flex h-[27px] items-center bg-[#e9e9e9] pl-2">
        <Ic n="grayfolder" />
        <Sep className="ml-auto h-6" />
        <span className="ml-[5px] flex h-[22px] w-[21px] items-center justify-center rounded-[2px] border border-[#2a58c0] bg-[#f4f7ff]"><Ic n="grid" s={14} /></span>
        <Ic n="gridgreen" className="mr-[9px] ml-[5px]" />
      </div>
      <div className="h-[21px] bg-[#c0c0c0]" />
      <div className="flex h-[595px] overflow-hidden">
        <div className="w-[245px]">
          {tree.map(([lv, ic, label, w, arrow, grp, bold], i) => (
            <div key={i} className={`flex h-[19px] border-b border-white ${i === 12 ? "bg-[#d4dae0]" : grp ? "bg-[#e1e1e1]" : "bg-[#f0f0f0]"}`}>
              <div className={`flex h-[18px] w-[225px] shrink-0 items-center overflow-hidden ${i === 12 ? "outline-1 -outline-offset-1 outline-dashed outline-[#777]" : ""}`}>
                <span className={`${indent[lv]} shrink-0`} />
                <span className="flex w-[17px] shrink-0 justify-center pr-[4px]">
                  {arrow === "d" ? <Tri d="d" s={9} /> : arrow === "r" ? <Tri d="r" s={9} /> : null}
                </span>
                <Ic n={ic} className="mr-1" />
                <Fit w={w} className={bold ? "pt-[2px] text-[12px] leading-[18px] font-semibold" : "pt-[2px] text-[12px] leading-[18px]"}>{label}</Fit>
              </div>
              <span className="h-full w-5 shrink-0 border-l border-[#c4c4c4]" />
            </div>
          ))}
        </div>
        <div className="flex w-[19px] flex-col bg-[#b8b8b8] pl-px">
          <SbBtn d="up" className="mb-px h-[18px] w-[18px]" />
          <span className="flex h-[266px] w-[18px] items-center justify-center border border-[#8a8a8a] bg-[#e4e4e4] shadow-[inset_0_0_0_1px_#fff]">
            <span className="h-[9px] w-2 bg-[repeating-linear-gradient(#666_0_1px,transparent_1px_3px)]" />
          </span>
          <SbBtn d="down" className="mt-auto h-[18px] w-[18px]" />
        </div>
      </div>
      <div className="h-[3px] bg-[#1c2133]" />
      <div className="flex h-[22px] items-center border-b border-[#777] bg-linear-to-b from-[#ececec] to-[#d0d0d0] text-[13px] font-semibold">
        <span className="flex h-full w-[21px] items-center justify-center border-r border-[#888]"><Chev d="down" c="#000" /></span>
        <Fit w={80} className="ml-1 pt-[2px]">Details view</Fit>
      </div>
      <div className="h-[25px] border-b border-[#777] bg-[#cbcbcb]" />
      <div className="h-[27px] bg-[#ebebeb]" />
      <div className="flex h-[19px] items-center border-y border-[#aaa] bg-linear-to-b from-[#e2e2e2] via-[#d4d4d4] to-[#e2e2e2] text-[12px]">
        <span className="h-full w-[19px] border-r border-[#aaa]" />
        <span className="h-full w-[160px] border-r border-[#aaa] pl-[3px] leading-[19px]"><Fit w={31}>Name</Fit></span>
      </div>
      <div className="flex-1 bg-[repeating-linear-gradient(#efefef_0_18px,#fff_18px_19px)]" />
    </div>
  );
}

function TagPanel() {
  return (
    <div className="flex h-[886px] w-[209px] flex-col bg-[#efefef]">
      <div className="flex h-6 items-center bg-[#b0b0b0] text-[13px] font-semibold text-white">
        <svg width="10" height="16" viewBox="0 0 10 16" fill="none" stroke="#fff" strokeWidth="1.200" className="ml-[7px]"><path d="M1.500 3v8q0 4 3.500 4t3.500-4V3q0-2.500-2.500-2.500T3.500 3v8q0 1.500 1.500 1.500T6.500 11V4" /></svg>
        <Fit w={54} className="ml-[14px] pt-px">...le [32]</Fit>
        <span className="mr-[5px] ml-auto"><WinBtns /></span>
      </div>
      <div className="h-[3px] bg-[#f2f2f2]" />
      <div className="flex h-[25px] items-end border-b border-[#777] bg-[#cbcbcb] pl-[58px]">
        <div className="-mb-px flex h-[23px] w-[101px] shrink-0 items-center gap-[3px] border border-b-0 border-[#777] bg-[#f0f0f0] pl-[2px] text-[13px] font-semibold">
          <Ic n="hmitags" /><Fit w={55}>HMI tags</Fit>
        </div>
        <span className="ml-[7px] flex h-[21px] w-[22px] shrink-0 items-center justify-center border border-b-0 border-[#777] bg-[#f0f0f0]"><Tri d="l" s={9} c="#666" /></span>
        <span className="flex h-[21px] w-[21px] shrink-0 items-center justify-center border border-b-0 border-l-0 border-[#777] bg-[#f0f0f0]"><Tri d="r" s={9} c="#333" /></span>
      </div>
      <div className="flex h-[27px] items-center bg-[#e9e9e9] pl-[7px]">
        <Ic n="insrow" /><Sep className="ml-[5px] h-6" /><Ic n="exp" className="ml-[7px]" /><Ic n="imp" className="ml-[7px]" />
        <Sep className="ml-[5px] h-6" /><Ic n="tagconn" className="ml-[6px]" /><Ic n="winuser" className="mr-[15px] ml-auto" />
      </div>
      <div className="h-[21px] bg-[#d8d8d8] pl-[25px] text-[13px] leading-5 font-semibold"><Fit w={111}>Default tag table</Fit></div>
      <div className="flex h-[19px] items-center border-y border-[#aaa] bg-linear-to-b from-[#e4e7ea] to-[#d2d8de] text-[12px]">
        <span className="h-full w-[23px] border-r border-[#aaa] bg-[#cfcfcf]" />
        <span className="h-full w-[20px] border-r border-[#aaa]" />
        <Fit w={31} className="ml-[3px] pt-[2px] leading-[17px]">Name</Fit>
        <span className="ml-2 pt-[3px]"><Tri d="u" s={9} /></span>
      </div>
      <div className="h-[722px] pt-px">
        {Array.from({ length: 38 }, (_, i) => (
          <div key={i} className={`flex h-[19px] text-[12px] ${i === 0 ? "bg-[#d8dee3]" : "bg-[#f0f0f0]"}`}>
            <span className={`w-[24px] shrink-0 border-r border-b border-r-[#aaa] border-b-white ${i === 0 ? "bg-[#bfcad6]" : "bg-[#c9c9c9]"}`} />
            <span className={`flex w-[19px] shrink-0 items-center border-r border-b border-white ${i < 31 ? "bg-[#d9d9d9]" : i === 31 ? "bg-[#e4e4e4]" : "bg-[#ececec]"}`}>
              {i < 31 && <Ic n="tag" className="ml-px" />}
            </span>
            <span className="flex flex-1 items-center overflow-hidden border-b border-white">
              {i < 31 && <Fit w={tags[i][1]} className="ml-[23px] pt-[2px]">{tags[i][0]}</Fit>}
              {i === 31 && <Fit w={60} className="ml-1 pt-[2px]">{"<Add new>"}</Fit>}
            </span>
          </div>
        ))}
      </div>
      <div className="flex h-[18px] bg-[#c0c0c0] pl-[24px]">
        <SbBtn d="left" className="w-[18px]" />
        <span className="ml-[2px] flex w-[18px] items-center justify-center border border-[#8a8a8a] bg-[#e8e8e8]"><span className="h-2 w-2 bg-[repeating-linear-gradient(90deg,#666_0_1px,transparent_1px_2px)]" /></span>
        <SbBtn d="right" className="ml-auto w-[18px]" />
      </div>
      <div className="flex h-2 items-center justify-center gap-[11px] border-y border-[#999] bg-[#dcdcdc]">
        <span className="flex h-full w-[23px] items-center justify-center bg-[#b4b4b4]"><Tri d="u" s={5} /></span>
        <span className="flex h-full w-[23px] items-center justify-center bg-[#b4b4b4]"><Tri d="d" s={5} /></span>
      </div>
      <div className="flex flex-1 items-center bg-[#b0b0b0] pl-[53px] text-[12px] font-semibold text-white"><Fit w={102}>HMI tag parameter</Fit></div>
    </div>
  );
}

/* ---------- HMI screen objects (screen origin at 601,252) ---------- */
const at = (x: number, y: number, w?: number, h?: number) => ({ left: x - 601, top: y - 252, width: w, height: h });
const tahoma = "font-['DejaVu_Sans_Condensed','Noto_Sans',sans-serif]";

const btns: [string, number, number, number, number][] = [
  ["Stop", 773, 331, 103, 42], ["Reset", 772, 386, 103, 41], ["Start", 772, 443, 103, 42],
  ["Stop", 1074, 332, 103, 41], ["Reset", 1073, 387, 103, 41], ["Start", 1073, 444, 103, 41],
  ["Stop", 1355, 332, 103, 41], ["Reset", 1355, 387, 103, 41], ["Start", 1355, 444, 103, 41],
  ["Start", 903, 759, 84, 36], ["Reset", 997, 759, 84, 36], ["Stop", 1092, 759, 84, 36],
];
const heads: [string, number, number, number, number, number, number][] = [
  ["Distribution Station Panel", 604, 296, 295, 17, 155, 674], ["Measuring Station Panel", 901, 296, 296, 17, 146, 976], ["Sorting Station Panel", 1199, 296, 295, 17, 128, 1283],
  ["Distribution Station Information", 604, 518, 295, 18, 194, 653], ["Measuring Station Information", 901, 517, 296, 18, 185, 956], ["Sorting Station Information", 1199, 517, 295, 18, 168, 1263],
  ["Master Control Panel", 896, 722, 289, 19, 125, 978],
];
const labels: [string, number, number, number][] = [
  ["Workpiece", 661, 600, 81], ["Height Analog:", 945, 570, 116], ["Black", 987, 625, 41],
  ["Black", 1270, 569, 41], ["Metalic", 1270, 603, 54], ["Pink", 1270, 638, 32],
];
const lamps = [[758, 590], [1070, 615], [1353, 559], [1353, 593], [1354, 627]];
const dotSteps = [0, 6, 11, 17, 22];
const labelDots = [[964, 286], [707, 279], [708, 292], [741, 609], [1310, 577], [1323, 612], [1302, 646]].slice(1);

function HmiScreen() {
  return (
    <div className={`relative h-[560px] w-[896px] overflow-hidden bg-white text-black ${tahoma}`}>
      <div className="absolute inset-x-0 top-[41px] bottom-0 bg-[repeating-linear-gradient(135deg,#fff_0_1.4px,#999_1.4px_2.12px)]" />
      <div className="absolute inset-x-[3px] top-[44px] bottom-[3px] bg-[#b5b5b5]">
        <svg className="absolute inset-0 h-full w-full" shapeRendering="crispEdges">
          <defs>
            <pattern id="dots" width="28" height="28" patternUnits="userSpaceOnUse">
              {dotSteps.map((y) => dotSteps.map((x) => <rect key={`${x}-${y}`} x={x + 2} y={y + 1} width="1" height="1" fill="#000" />))}
            </pattern>
          </defs>
          <rect width="100%" height="100%" fill="url(#dots)" />
        </svg>
      </div>
      <Fit w={100} className="absolute top-[4px] left-[6px] text-[26px] leading-[24px] text-[#f00a0a]">Temasek</Fit>
      <Fit w={76} className="absolute top-[28px] left-[32px] text-[12px] leading-[11px] text-[#31344a]">POLYTECHNIC</Fit>
      <Fit w={251} className="absolute top-[6px] left-[336px] text-[25px] leading-[34px]">Thum Wei Aun Marcus</Fit>
      <Fit w={58} className="absolute top-[5px] left-[827px] font-['Noto_Sans'] text-[12px] leading-[14px] font-extrabold text-[#009999]">SIEMENS</Fit>
      <Fit w={59} className="absolute top-[22px] left-[827px] font-['Noto_Sans'] text-[10px] leading-[14px] text-[#222]">SIMATIC HMI</Fit>

      {[[604, 313, 295, 203], [901, 313, 296, 203], [1199, 313, 295, 203], [604, 536, 295, 138], [901, 535, 296, 138], [1199, 535, 295, 138], [895, 721, 291, 88]].map(([x, y, w, h], i) => (
        <div key={i} className="absolute border-t border-r-2 border-b border-t-[#7fd8d8] border-r-[#2a9494] border-b-[#188888] bg-[#bafaf8]" style={at(x, y, w + (i < 6 ? 1 : 0), h + 1)} />
      ))}
      {[[899, 296, 17], [1197, 296, 17], [899, 517, 19], [1197, 517, 19]].map(([x, y, h], i) => (
        <i key={i} className="absolute border-l border-[#008080] bg-[#8fe4e4]" style={at(x, y, 2, h)} />
      ))}
      {heads.map(([t, x, y, w, h, tw, tx]) => (
        <div key={t} className="absolute bg-[#008080] text-[11.5px] font-bold text-white shadow-[0_-1px_0_#7fd8d8]" style={at(x, y, w, h)}>
          <span className="block" style={{ marginLeft: tx - x, lineHeight: `${h}px` }}><Fit w={tw}>{t}</Fit></span>
        </div>
      ))}
      {[[642, 663], [941, 962], [1230, 1252]].map(([tx, cx], i) => (
        <React.Fragment key={i}>
          <Fit w={80} className={`absolute top-[80px] text-[17.5px] leading-[22px] font-bold text-[#31344a] ${["left-[40px]", "left-[340px]", "left-[629px]"][i]}`}>Occupied</Fit>
          <i className="absolute size-px bg-black" style={at(tx + 85, 351)} />
          <i className="absolute rounded-full border border-[#2a2d40] bg-[#d9d9d9]" style={at(cx, 358, 44, 45)} />
        </React.Fragment>
      ))}
      {[[639, 456], [938, 455], [1228, 455]].map(([x, y], i) => (
        <React.Fragment key={i}>
          <div className="absolute text-[11.5px] leading-[14px] font-bold text-[#5a6070]" style={at(x + 9, y - 14)}><Fit w={74}>Auto/Manual</Fit></div>
          <div className="absolute flex rounded-[2px] border border-[#4a4c5a] bg-[#f1f1f1]" style={at(x, y, 92, 30)}>
            <span className="flex w-[45px] items-center justify-center gap-1 bg-linear-to-b from-[#777985] via-[#636571] to-[#5b5d69]">
              <i className="h-2.5 w-px bg-[#30323c]" /><i className="h-2.5 w-px bg-[#30323c]" /><i className="h-2.5 w-px bg-[#30323c]" />
            </span>
            <span className="flex flex-1 items-center justify-center text-[12px] font-bold text-[#44495c]"><Fit w={22}>OFF</Fit></span>
          </div>
        </React.Fragment>
      ))}
      {btns.map(([t, x, y, w, h], i) => (
        <div key={i} className="absolute flex items-center justify-center rounded-[2px] border border-[#4c4e5a] bg-linear-to-b from-[#7f818c] from-0% via-[#646672] via-30% to-[#595b67] text-[12px] font-bold text-white" style={at(x, y, w, h)}>
          <Fit w={t === "Reset" ? 33 : t === "Start" ? 30 : 28}>{t}</Fit>
        </div>
      ))}
      {labels.map(([t, x, y, w], i) => (
        <div key={i} className="absolute text-[17px] leading-6 text-[#31344a]" style={at(x, y - 12)}><Fit w={w}>{t}</Fit></div>
      ))}
      {labelDots.map(([x, y], i) => <i key={i} className="absolute size-px bg-black" style={at(x, y)} />)}
      {lamps.map(([x, y], i) => (
        <i key={i} className="absolute rounded-[4px] border-2 border-[#15182c] bg-[#d9d9d9]" style={at(x, y, 54, 19)} />
      ))}
      <div className="absolute flex items-center border-2 border-[#50525f] bg-white pl-1 text-[12.5px] font-bold text-[#31344a]" style={at(1077, 557, 68, 22)}><Fit w={48}>+00000</Fit></div>
      <div className="absolute border border-[#d8c860] bg-[#fff79a] pl-[2px] font-['Noto_Sans'] text-[11px] leading-[14px]" style={at(1068, 656, 166, 18)}><Fit w={160}>{"Name: Rectangle_6   Layer: 0"}</Fit></div>
    </div>
  );
}

function FormatBar() {
  const g = (n: string, ml = "ml-[11px]") => (<><Ic n={n} className={ml} /><Pm className="ml-[3px]" /></>);
  return (
    <div className="flex h-[28px] items-center border-b border-[#888] bg-[#e9e9e9] pl-[6px] text-[#444]">
      <span className="h-[18px] w-[95px] shrink-0 border border-[#999] bg-[#e6e6e6]" />
      <span className="flex h-[18px] w-[16px] shrink-0 items-center justify-center border border-l-0 border-[#aaa] bg-[#f0f0f0]"><span className="h-2.5 w-2 bg-[repeating-linear-gradient(#777_0_1px,transparent_1px_3px)]" /></span>
      <span className="ml-[9px] h-[18px] w-[21px] shrink-0 border border-[#999] bg-[#e6e6e6]" />
      <span className="flex h-[18px] w-[16px] shrink-0 items-center justify-center border border-l-0 border-[#aaa] bg-[#f0f0f0]"><Tri d="d" s={8} c="#888" /></span>
      <span className="ml-[13px] w-[12px] text-[15px] font-bold">B</span>
      <span className="ml-[13px] w-[11px] font-['Liberation_Serif'] text-[17px] font-bold italic">I</span>
      <span className="ml-[12px] w-[12px] text-[15px] font-semibold underline">U</span>
      <span className="ml-[13px] w-[11px] text-[15px] font-semibold line-through">S</span>
      <span className="ml-[8px] w-[21px] shrink-0 text-[15px] font-semibold">A<sup className="text-[8px]">▴</sup></span><Pm />
      <Ic n="align" className="ml-[7px]" /><Pm className="ml-[4px]" /><Sep className="ml-[6px] h-6" />
      <span className="ml-[7px] w-4 border-b-[3px] border-[#555] text-center text-[15px] leading-[14px] font-semibold">A</span><Pm className="ml-[3px]" />
      <Ic n="fill" className="ml-[8px]" /><Pm className="ml-[4px]" c="#000" />
      {g("pen", "ml-[7px]")}<Sep className="ml-[5px] h-6" />
      {g("lines", "ml-[8px]")}{g("line1", "ml-[8px]")}<Sep className="ml-[6px] h-6" />
      {g("order", "ml-[7px]")}{g("rotate", "ml-[8px]")}{g("center", "ml-[8px]")}{g("dist", "ml-[8px]")}{g("size", "ml-[8px]")}
      <Sep className="ml-[5px] h-6" /><Ic n="brush" className="ml-[8px]" />{g("layer", "ml-[8px]")}
      <Ic n="zoomsel" className="ml-[9px]" />
    </div>
  );
}

function Editor() {
  return (
    <div className="flex h-[886px] w-[1106px] flex-col">
      <div className="flex h-6 items-center bg-[#2d344c] pl-1 text-[13px] font-semibold text-white">
        <svg width="15" height="10" viewBox="0 0 15 10" fill="none" stroke="#fff" strokeWidth="1.200"><path d="M14 1.500H6Q1 1.500 1 5t5 3.500h7.500v-5H6.500Q4 3.500 4 5t2.500 1.200H11" /></svg>
        <Fit w={123} className="ml-[12px] pt-px">Combined_Put_Get</Fit>
        <span className="ml-2"><Tri d="r" s={9} c="#fff" /></span>
        <Fit w={158} className="ml-[8px] pt-px">HMI_1 [TP1500 Comfort]</Fit>
        <span className="ml-2"><Tri d="r" s={9} c="#fff" /></span>
        <Fit w={51} className="ml-[9px] pt-px">Screens</Fit>
        <span className="ml-2"><Tri d="r" s={9} c="#fff" /></span>
        <Fit w={60} className="ml-[8px] pt-px">Screen_1</Fit>
        <span className="mr-[4px] ml-auto"><WinBtns /></span>
      </div>
      <div className="h-[3px] bg-[#f6f6f6]" />
      <div className="h-[25px] border-b border-[#777] bg-[#cbcbcb]" />
      <FormatBar />
      <div className="flex h-[787px]">
        <div className="flex w-[1090px] bg-[#707070] pl-[30px]">
          <div className="h-[765px] w-[1030px] bg-[#73879b] pl-[22px]">
            <div className="h-[695px] w-[987px] bg-black">
              <div className="flex h-[98px] items-start justify-between pr-[45px] pl-[46px]">
                <div className="mt-[18px] flex h-[25px] w-[94px] items-center justify-center bg-[#008080] text-[17px] font-bold text-white"><Fit w={83}>SIEMENS</Fit></div>
                <div className="mt-[14px] text-[22px] leading-8 font-light text-[#f0f0f0]"><Fit w={125}>SIMATIC HMI</Fit></div>
              </div>
              <div className="flex pl-[46px]">
                <HmiScreen />
                <div className="h-[154px] w-[45px] bg-[#73879b]">
                  <div className="flex h-[153px] w-[47px] items-center justify-center">
                    <span className="block [transform:rotate(90deg)_scaleX(0.68)] font-['Liberation_Sans'] text-[60px] leading-[46px] text-black [-webkit-text-stroke:1.2px_#000]">TOUCH</span>
                  </div>
                </div>
              </div>
            </div>
          </div>
        </div>
        <div className="flex w-4 flex-col bg-[#c0c0c0]">
          <SbBtn d="up" className="h-[17px]" />
          <span className="mt-px flex h-[732px] items-center justify-center border border-[#8a8a8a] bg-[#e2e2e2] shadow-[inset_0_0_0_1px_#fff]"><span className="h-2 w-[7px] bg-[repeating-linear-gradient(#666_0_1px,transparent_1px_3px)]" /></span>
          <SbBtn d="down" className="mt-auto h-[17px]" />
        </div>
      </div>
      <div className="flex flex-1 items-center bg-[#e9e9e9]">
        <SbBtn d="left" className="h-[18px] w-[17px]" />
        <span className="ml-[2px] flex h-[18px] w-[790px] items-center justify-center border border-[#8a8a8a] bg-[#e2e2e2] shadow-[inset_0_0_0_1px_#fff]"><span className="h-2 w-2 bg-[repeating-linear-gradient(90deg,#666_0_1px,transparent_1px_2px)]" /></span>
        <SbBtn d="right" className="ml-[2px] h-[18px] w-[18px]" />
        <span className="ml-[6px] h-[18px] w-[140px] border border-[#777] bg-white pl-[2px] text-[12px] leading-4"><Fit w={24}>70%</Fit></span>
        <span className="flex h-[18px] w-[17px] items-center justify-center border border-l-0 border-[#777] bg-[#dcdcdc]"><Tri d="d" s={8} /></span>
        <svg width="68" height="16" viewBox="0 0 68 16" className="ml-[17px]"><path d="M0 6.500h68" stroke="#777" /><path d="M1 13.500h67" stroke="#222" strokeWidth="3" strokeDasharray="1 3.100" /><path d="M14.500 2.500h7v6l-3.500 4-3.500-4z" fill="#d8d8d8" stroke="#777" /></svg>
        <span className="ml-auto flex h-full w-4 items-center justify-center bg-white">
          <svg width="13" height="13" viewBox="0 0 13 13"><path d="M4.500.500h8v11h-8z" fill="#cdd8f4" stroke="#1a2a80" strokeWidth="1.500" /><path d="M.500 3.500h6v5h-6z" fill="#2a5cf0" stroke="#1a2a80" /></svg>
        </span>
      </div>
    </div>
  );
}

const InfoDot = () => (
  <span className="flex size-[13px] items-center justify-center rounded-full border border-[#a89000] bg-[#ffe600] font-['Liberation_Serif'] text-[11px] leading-3 font-bold text-black">i</span>
);

function Inspector() {
  return (
    <div className="flex flex-1 flex-col bg-[#cbcbcb] text-[13px]">
      <div className="flex h-6 items-end bg-[#b0b0b0] pl-[934px] font-semibold text-[#5c5c5c]">
        <span className="flex h-[21px] w-[112px] items-center gap-[4px] border border-b-0 border-[#777] bg-[#cfcfcf] pl-[2px]"><Ic n="props" /><Fit w={64} className="pt-[2px]">Properties</Fit></span>
        <span className="ml-[2px] flex h-[21px] w-[75px] items-center gap-[2px] border border-b-0 border-[#999] bg-[#f0f0f0] pl-[2px] text-black"><Ic n="infoi" /><Fit w={26} className="pt-[2px]">Info</Fit><span className="ml-[8px]"><InfoDot /></span></span>
        <span className="ml-px flex h-[21px] w-[121px] items-center gap-[4px] border border-b-0 border-[#777] bg-[#cfcfcf] pl-[2px]"><Ic n="diag" /><Fit w={75} className="pt-[2px]">Diagnostics</Fit></span>
        <span className="mb-[7px] ml-[20px]">
          <svg width="48" height="12" viewBox="0 0 48 12" fill="#fff"><path d="M0 2h8v10H0z" /><path d="M3 0h8v9H9V1H3z" /><path d="M18.500.500h10v11h-10zM18 3h11M18 6h11M18 9h11" stroke="#f0f0f0" fill="none" /><path d="M36 3h12l-6 7z" /></svg>
        </span>
      </div>
      <div className="h-[3px] bg-[#f4f4f4]" />
      <div className="flex flex-1 items-end pl-[6px] font-semibold text-[#5c5c5c]">
        <span className="flex h-[18px] w-[92px] items-center border border-b-0 border-[#777] bg-[#d4d4d4] pl-[11px]"><Fit w={51} className="pt-[2px]">General</Fit><span className="ml-[11px] pt-px"><InfoDot /></span></span>
        <span className="ml-px flex h-[18px] w-[143px] items-center border border-b-0 border-[#777] bg-[#d4d4d4] pl-[11px]"><Fit w={109} className="pt-[2px]">Cross-references</Fit></span>
        <span className="ml-px flex h-[18px] w-[86px] items-center border border-b-0 border-[#777] bg-[#efefef] pl-[11px] text-black"><Fit w={52} className="pt-[2px]">Compile</Fit></span>
      </div>
    </div>
  );
}

const SectionHead = ({ t, w }: { t: string; w: number }) => (
  <div className="flex h-6 items-center border-t-3 border-b border-t-[#9b9b9b] border-b-[#777] bg-linear-to-b from-[#eaeaea] to-[#d4d4d4] text-[13px] font-semibold">
    <span className="flex h-full w-[21px] items-center justify-center border-r border-[#888]"><Chev d="down" c="#000" /></span>
    <Fit w={w} className="ml-1 pt-[2px]">{t}</Fit>
  </div>
);

function Toolbox() {
  return (
    <div className="flex w-[283px] flex-col bg-[#efefef]">
      <div className="flex h-6 items-center bg-[#b0b0b0] pr-[5px] pl-[5px] text-[13px] font-semibold text-white">
        <Fit w={52} className="pt-px">Toolbox</Fit>
        <span className="ml-auto flex items-center gap-[8px]">
          <svg width="11" height="13" viewBox="0 0 11 13" fill="#fff"><path d="M0 4h8v9H0z" /><path d="M3 1h8v8H9V3H3z" /></svg>
          <Bars /><Tri d="r" s={13} c="#fff" />
        </span>
      </div>
      <div className="h-[6px] bg-[#f4f4f4]" />
      <div className="flex h-[22px] items-center border-b border-[#777] bg-linear-to-b from-[#f4f4f4] to-[#e0e0e0] pl-[5px] text-[13px] font-semibold"><Fit w={51}>Options</Fit></div>
      <div className="flex h-[27px] items-center bg-[#e9e9e9] pl-[7px] text-[12px]">
        <Ic n="cursor" /><Ic n="stamp" className="ml-[8px]" /><Ic n="toolcfg" className="ml-[8px]" /><Ic n="table" className="ml-[8px]" />
        <span className="ml-[7px] flex h-[21px] w-[121px] items-center border border-[#888] bg-white">
          <span className="flex-1 overflow-hidden pl-[4px]"><Fit w={98}>Dark default value</Fit></span>
          <span className="flex h-full w-[17px] items-center justify-center border-l border-[#777] bg-[#d4d4d4]"><Tri d="d" s={8} /></span>
        </span>
        <Ic n="win" className="mr-[5px] ml-auto" />
      </div>
      <SectionHead t="Basic objects" w={84} />
      <div className="flex h-[150px] flex-wrap content-start pt-[6px] pl-[6px]">
        {["line", "poly", "polygon", "ellipse", "circle", "rect", "text", "pic"].map((n) => <Big key={n} n={n} />)}
      </div>
      <SectionHead t="Elements" w={59} />
      <div className="flex h-[150px] flex-wrap content-start pt-[6px] pl-[6px]">
        {["num", "btn", "combo", "gio", "date", "bar", "sw", "lib", "slider", "gauge", "clock"].map((n) => <Big key={n} n={n} />)}
      </div>
      <SectionHead t="Controls" w={52} />
      <div className="flex h-[150px] flex-wrap content-start pt-[6px] pl-[6px]">
        {["alarm", "trend", "userk", "html", "watch", "dish", "recv", "xy", "diag", "media", "plugc", "sysd", "graf", "plcw", "cam", "pdf"].map((n) => <Big key={n} n={n} />)}
      </div>
      <SectionHead t="Graphics" w={56} />
      <div className="flex h-[25px] items-center gap-2 bg-[#e9e9e9] pb-[3px] pl-[7px]"><Ic n="newgf" /><Ic n="delgf" /></div>
      <div className="h-[100px] overflow-hidden text-[12px] font-semibold">
        {[["gfpc", "WinCC graphics folder", 118], ["gfuser", "My graphics folder", 101], null, null, null, null].map((r, i) => (
          <div key={i} className="flex h-[19px] items-center border-b border-white pl-[4px]">
            {r && (<>
              <span className="w-[13px]">{i === 0 && <Tri d="r" s={9} />}</span>
              <Ic n={r[0] as string} />
              <span className={`ml-px flex h-[18px] items-center px-[2px] ${i === 0 ? "bg-[#c2cdda]" : ""}`}><Fit w={r[2] as number} className="pt-[2px]">{r[1] as string}</Fit></span>
            </>)}
          </div>
        ))}
      </div>
      <div className="flex h-2 items-center justify-center gap-[10px] border-y border-[#999] bg-[#dcdcdc]">
        <span className="flex h-full w-[24px] items-center justify-center bg-[#b4b4b4]"><Tri d="u" s={5} /></span>
        <span className="flex h-full w-[24px] items-center justify-center bg-[#b4b4b4]"><Tri d="d" s={5} /></span>
      </div>
    </div>
  );
}

const sideTabs: [string, string, string, number][] = [
  ["Toolbox", "tabtool", "mt-[30px] h-[95px] bg-[#f2f2f2] text-black", 51],
  ["Animations", "tabanim", "mt-[3px] h-[119px] bg-[#d6d6d6] text-[#555]", 75],
  ["Layout", "tablayout", "mt-[2px] h-[88px] bg-[#d6d6d6] text-[#555]", 43],
  ["Instructions", "tabinstr", "mt-[2px] h-[122px] bg-[#d6d6d6] text-[#555]", 76],
  ["Tasks", "tabtasks", "mt-[2px] h-[79px] bg-[#d6d6d6] text-[#555]", 37],
  ["Libraries", "tablib", "mt-[2px] h-[99px] bg-[#d6d6d6] text-[#555]", 56],
];

function MainToolbar() {
  return (
    <div className="flex h-6 items-center text-[12px]">
      <Ic n="newfile" className="ml-[14px]" /><Ic n="open" className="ml-[7px]" /><Ic n="save" className="ml-[6px]" />
      <Fit w={65} className="ml-[5px] text-[#808080]">Save project</Fit>
      <Ic n="print" className="ml-[10px]" /><Sep className="ml-[4px] h-6" />
      <Ic n="cut" className="ml-[7px]" /><Ic n="copy" className="ml-[8px]" /><Ic n="paste" className="ml-[8px]" /><Ic n="del" className="ml-[8px]" /><Sep className="ml-[5px] h-6" />
      <Ic n="undo" className="ml-[6px]" /><Pm className="ml-[4px]" /><Ic n="redo" className="ml-[7px]" /><Pm className="ml-[4px]" /><Sep className="ml-[5px] h-6" />
      <Ic n="compile" className="ml-[8px]" /><Ic n="download" className="ml-[8px]" /><Ic n="upload" className="ml-[8px]" /><Ic n="sim" className="ml-[8px]" /><Ic n="rt" className="ml-[8px]" /><Sep className="ml-[5px] h-6" />
      <Ic n="plug" className="ml-[5px]" /><Fit w={52} className="ml-[5px]">Go online</Fit>
      <Ic n="unplug" className="ml-[7px]" /><Fit w={53} className="ml-[6px] text-[#808080]">Go offline</Fit><Sep className="ml-[7px] h-6" />
      <Ic n="access" className="ml-[7px]" /><Ic n="startcpu" className="ml-[8px]" /><Ic n="stopcpu" className="ml-[8px]" /><Sep className="ml-[5px] h-6" />
      <Ic n="xref" className="ml-[8px]" /><Sep className="ml-[6px] h-6" /><Ic n="splith" className="ml-[6px]" />
      <span className="ml-[5px] flex h-[22px] w-[22px] items-center justify-center rounded-[2px] border border-[#2a58c0] bg-[#f4f7ff]"><Ic n="splitv" /></span>
      <Sep className="ml-[2px] h-6" />
      <span className="ml-[6px] flex h-[18px] w-[120px] items-center border border-[#888] bg-white pl-[3px] text-[#777]"><Fit w={106} className="pt-px">{"<Search in project>"}</Fit></span>
      <Ic n="find" className="ml-[9px]" />
    </div>
  );
}

const menus: [string, number, string][] = [
  ["Project", 37, "ml-[12px]"], ["Edit", 21, "ml-[17px]"], ["View", 26, "ml-[17px]"], ["Insert", 31, "ml-[17px]"], ["Online", 35, "ml-[17px]"],
  ["Options", 42, "ml-[18px]"], ["Tools", 27, "ml-[18px]"], ["Window", 42, "ml-[18px]"], ["Help", 25, "ml-[17px]"],
];

export default function App() {
  return (
    <div className="flex h-[1080px] w-[1920px] flex-col overflow-hidden bg-[#b0b0b0] font-['Noto_Sans',sans-serif] text-black">
      <svg width="0" height="0" className="absolute"><defs><linearGradient id="gb" x1="0" y1="0" x2="1" y2="1"><stop offset="0" stopColor="#a6b8fc" /><stop offset="1" stopColor="#5070f4" /></linearGradient></defs></svg>
      <div className="flex h-[23px] items-end border-b border-black bg-[linear-gradient(#5a5a5a_0,#8c8c8c_7px,#1c1c1c_7px)] pb-px text-[13px] font-semibold text-white">
        <span className="ml-[6px] flex h-4 w-4 flex-col bg-[#34405c] text-center text-[8px] leading-[8px]"><span>TIA</span><span className="text-[6px] tracking-[-0.500px] text-[#9fb2dc]">V15.1</span></span>
        <Fit w={473} className="ml-[6px] pb-px leading-[18px]">{"Siemens  -  C:\\Users\\Trainer20\\Desktop\\Combined_Put_Get\\Combined_Put_Get"}</Fit>
        <svg width="44" height="13" viewBox="0 0 44 13" fill="#fff" className="mr-[4px] mb-[3px] ml-auto"><path d="M0 10h9v2H0z" /><path d="M16 4h6v7h-6z" /><path d="M19 1h6v6h-2V3h-4z" /><path d="M33 1.500l8.500 9M41.500 1.500l-8.500 9" stroke="#fff" strokeWidth="2" /></svg>
      </div>
      <div className="flex h-[51px] justify-between border-b border-[#1b2133] bg-[#cbcbcb]">
        <div className="pt-[3px]">
          <div className="flex h-[22px] items-center text-[12px]">{menus.map(([t, w, c]) => <Fit key={t} w={w} className={c}>{t}</Fit>)}</div>
          <MainToolbar />
        </div>
        <div className="flex flex-col items-end pt-[12px] pr-[23px]">
          <span className="pr-[24px] text-[13px] leading-[18px] font-semibold"><Fit w={199}>Totally Integrated Automation</Fit></span>
          <span className="-mt-[2px] text-[16px] leading-[16px] font-semibold text-[#6c6c6c]"><Fit w={65}>PORTAL</Fit></span>
        </div>
      </div>
      <div className="flex h-[937px] bg-[#1c2133]">
        <div className="flex w-[23px] flex-col bg-[#b0b0b0]">
          <div className="h-6 border-b border-white" />
          <div className="flex h-[222px] items-center justify-center border-b border-white pt-[4px] pr-[2px]">
            <span className="rotate-180 text-[13px] leading-4 font-bold text-white [writing-mode:vertical-rl]"><Fit w={84} className="vertical">Visualization</Fit></span>
          </div>
        </div>
        <div className="w-px" />
        <ProjectTree />
        <div className="w-[3px]" />
        <div className="flex w-[1318px] flex-col">
          <div className="flex gap-[3px]"><TagPanel /><Editor /></div>
          <div className="h-[3px]" />
          <Inspector />
        </div>
        <div className="w-[3px]" />
        <Toolbox />
        <div className="w-px" />
        <div className="flex flex-1 flex-col bg-[#b0b0b0]">
          {sideTabs.map(([t, ic, c, w]) => (
            <div key={t} className={`flex w-[21px] flex-col items-center gap-[3px] border border-l-0 border-[#777] pt-[2px] text-[13px] font-bold ${c}`}>
              <Ic n={ic} />
              <span className="leading-4 [writing-mode:vertical-rl]"><Fit w={w} className="vertical">{t}</Fit></span>
            </div>
          ))}
        </div>
      </div>
      <div className="flex h-[29px] items-center bg-[#1c1c1c] text-[12px]">
        <span className="ml-[33px]"><Tri d="l" s={11} c="#fff" /></span>
        <Fit w={74} className="ml-[9px] pt-[2px] text-[13px] font-semibold text-white">Portal view</Fit>
        <span className="ml-[54px] flex h-5 w-[113px] items-center gap-[4px] bg-[#c3c3c3] pl-[3px]"><Ic n="overview" /><Fit w={49}>Overview</Fit></span>
        <span className="ml-[3px] flex h-5 w-[113px] items-center gap-[4px] bg-[#c3c3c3] pl-[3px]"><Ic n="tagtable" /><Fit w={74}>Default tag t...</Fit></span>
        <span className="ml-[3px] flex h-5 w-[113px] items-center gap-[4px] bg-white pl-[3px]"><Ic n="scr" /><Fit w={51}>Screen_1</Fit></span>
        <span className="ml-[3px] flex h-5 w-[113px] items-center gap-[4px] bg-[#c3c3c3] pl-[3px]"><Ic n="conn" /><Fit w={66}>Connections</Fit></span>
        <span className="mr-[6px] ml-auto flex h-5 w-5 items-center justify-center bg-[#c8c8c8]">
          <svg width="16" height="16" viewBox="0 0 16 16" fill="none"><path d="M1 1h6v9H1zM1 4h6M1 7h6" stroke="#888" /><path d="M12 8V2M9.500 4L12 1l2.500 3M14.500 5v5" stroke="#0a1040" strokeWidth="1.300" /><path d="M.500 11.500h15v4H.500z" fill="#fff" stroke="#0a1040" strokeWidth="1.500" /><path d="M5 12v3M10 12v3" stroke="#0a1040" /></svg>
        </span>
        <span className="flex h-full w-[330px] items-center border-l border-[#555] pl-[3px] text-white">
          <svg width="15" height="15" viewBox="0 0 15 15"><circle cx="7.500" cy="7.500" r="7.500" fill="#0a1ef0" /><path d="M4 7.500l2.500 3L11 4.500" stroke="#fff" strokeWidth="1.800" fill="none" /></svg>
          <Fit w={187} className="ml-[4px] pt-[2px]">Project Combined_Put_Get opened.</Fit>
        </span>
      </div>
      <div className="flex h-10 items-center bg-[#060809] bg-[linear-gradient(#000_0_6px,#222_6px_8px,transparent_8px)]">
        <svg width="16" height="16" viewBox="0 0 16 16" fill="#fff" className="ml-4"><path d="M0 2.300l6.500-.9v6.200H0zM7.300 1.300L16 0v7.600H7.300zM0 8.400h6.500v6.200L0 13.700zM7.300 8.400H16V16l-8.700-1.300z" /></svg>
        <svg width="18" height="18" viewBox="0 0 18 18" fill="none" stroke="#fff" strokeWidth="1.400" className="ml-[31px]"><circle cx="11" cy="6.500" r="5" /><path d="M7.500 10L1 16.500" /></svg>
        <svg width="20" height="16" viewBox="0 0 20 16" fill="none" stroke="#fff" strokeWidth="1.300" className="ml-[29px]"><path d="M4.500 1h11v14h-11zM3 3H.700v10H3M17 3h2.300v10H17" /></svg>
        <span className="ml-[21px] flex h-full w-10 flex-col items-center justify-end border-b-2 border-[#76b9ed] pb-[7px]">
          <svg width="22" height="20" viewBox="0 0 22 20"><path d="M0 1h8l2 2h12v15H0z" fill="#ffe08a" /><path d="M0 1h8l1 3H0z" fill="#f4c448" /><path d="M4 10h14v9h-4v-4H8v4H4z" fill="#2fa4e4" /></svg>
        </span>
        <span className="ml-[5px] flex h-full w-12 items-center justify-center border-b-2 border-[#76b9ed] bg-[#3c3d3e] pt-[6px]">
          <span className="flex h-7 w-6 flex-col bg-[#303a50] text-center text-[14px] leading-[14px] text-white"><span>TIA</span><span className="text-[10px] tracking-[-0.800px] whitespace-nowrap text-[#a9bbe4]">V15.1</span></span>
        </span>
        <div className="ml-auto flex h-full items-center pt-[2px] text-white">
          <svg width="13" height="17" viewBox="0 0 13 17" fill="none" stroke="#fff" strokeWidth="1.200"><path d="M1 5.500h7v9l-1.500 2h-4L1 14.500zM2.500 5.500v-5h4v5M7 13l2 2.500 4-5" /></svg>
          <span className="ml-[7px] flex h-4 w-4 flex-col bg-[#3c4560] text-[5.500px] leading-[7px] font-bold"><span>LICEN</span><span className="text-right text-[9px] leading-[9px] text-[#8aa4e0]">MA</span></span>
          <svg width="16" height="16" viewBox="0 0 16 16" fill="none" className="ml-2"><rect width="16" height="16" rx="2" fill="#2e9cd8" /><path d="M4 3h9v6H4zM3 6v7h8M6 11h8" stroke="#d8f0ff" strokeWidth="1.300" /></svg>
          <span className="ml-2 flex h-4 w-4 flex-col bg-[#3c5058] text-[6.500px] leading-[8px] font-bold"><span>DIAG</span><svg width="14" height="8" viewBox="0 0 14 9" fill="none"><path d="M3 3l4 4.500 6-7" stroke="#30e030" strokeWidth="2.500" /></svg></span>
          <svg width="16" height="17" viewBox="0 0 16 17" className="ml-[9px]"><path d="M8 0q4 2.500 7.500 2.300Q16 12 8 17 0 12 .500 2.300 4 2.500 8 0z" fill="#fff" /><path d="M8 1v15M1 8.500h14" stroke="#060809" strokeWidth="1.500" /></svg>
          <svg width="17" height="16" viewBox="0 0 17 16" fill="none" className="ml-[7px]"><path d="M3.500 3.500h12v8h-12zM1 1h4v4H1zM3 5v9h6" stroke="#fff" strokeWidth="1.200" /><path d="M11 6l5.500 9.500h-11z" fill="#fbbc10" /><path d="M11 9v3.500M11 13.500v1" stroke="#222" strokeWidth="1.300" /></svg>
          <svg width="15" height="14" viewBox="0 0 15 14" fill="none" stroke="#fff" strokeWidth="1.200" className="ml-[7px]"><path d="M.500 5v4H3l3 3.500v-11L3 5zM9 4.500l5 5M14 4.500l-5 5" /></svg>
          <span className="ml-[8px] flex w-[58px] flex-col items-center pb-[2px] font-['Open_Sans'] text-[12px] leading-[18px]"><Fit w={49}>10:28 AM</Fit><Fit w={53}>27/7/2020</Fit></span>
          <svg width="17" height="17" viewBox="0 0 17 17" fill="none" stroke="#fff" strokeWidth="1.300" className="ml-[16px]"><path d="M.700 1h15.600v11.500H11L8.500 15.500 6 12.500H.700z" /></svg>
          <span className="mr-[4px] ml-[19px] h-full w-px bg-[#666]" />
        </div>
      </div>
    </div>
  );
}
